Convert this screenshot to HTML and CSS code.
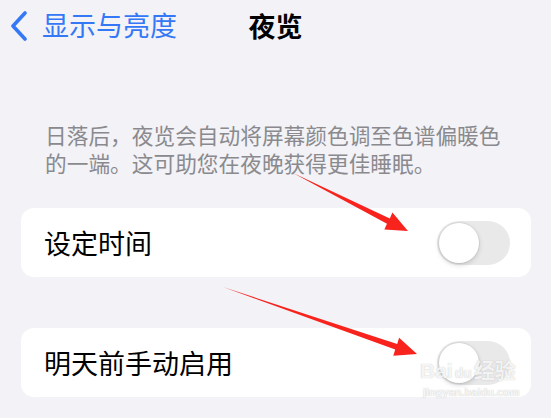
FILE: index.html
```html
<!DOCTYPE html>
<html lang="zh-CN">
<head>
    <meta charset="UTF-8">
    <meta name="viewport" content="width=device-width, initial-scale=1.0">
    <title>夜览</title>
    <link rel="stylesheet" href="styles.css">
</head>
<body>

    <div class="screen">
        <div class="navbar">
            <a class="back" href="#">
                <svg class="chevron" width="18" height="30" viewBox="0 0 18 30">
                    <path d="M15 2 L3 15 L15 28" fill="none" stroke="#3478f6" stroke-width="3.6" stroke-linecap="round" stroke-linejoin="round"/>
                </svg>
                <span>显示与亮度</span>
            </a>
            <div class="title">夜览</div>
            <div></div>
        </div>

        <p class="note">日落后，夜览会自动将屏幕颜色调至色谱偏暖色的一端。这可助您在夜晚获得更佳睡眠。</p>

        <div class="card">
            <span class="label">设定时间</span>
            <div class="toggle"><div class="knob"></div></div>
        </div>

        <div class="card second">
            <span class="label">明天前手动启用</span>
            <div class="toggle"><div class="knob"></div></div>
        </div>

        <svg class="arrows" width="551" height="418" viewBox="0 0 551 418">
            <polygon points="293,173 389.8,218.4 392.4,212.6 408,231 384.3,229.6 387,223.8" fill="#f7231c"/>
            <polygon points="223,287 397.2,344 399.1,337.8 417,354 393.3,355.8 395.2,349.6" fill="#f7231c"/>
        </svg>

        <div class="watermark">
            <div class="wm-logo">Bai<span class="wm-du">du</span>经验</div>
            <div class="wm-url">jingyan.baidu.com</div>
        </div>
    </div>

</body>
</html>
```

FILE: styles.css
```css
body {
    margin: 0;
    background-color: #f2f2f7;
    font-family: "Noto Sans CJK SC", "Noto Sans", sans-serif;
}
.screen {
    position: relative;
    width: 551px;
    height: 418px;
    overflow: hidden;
}
.navbar {
    display: grid;
    grid-template-columns: 1fr auto 1fr;
    align-items: center;
    height: 50px;
}
.back {
    display: flex;
    align-items: center;
    gap: 14px;
    padding-left: 10px;
    color: #3478f6;
    text-decoration: none;
    font-size: 27px;
    line-height: 50px;
}
.chevron {
    display: block;
    margin-top: 1px;
}
.title {
    font-size: 27px;
    font-weight: bold;
    color: #000;
}
.note {
    margin: 71px 0 0 45px;
    width: 470px;
    font-size: 21.7px;
    line-height: 28px;
    color: #8a8a8e;
}
.card {
    display: flex;
    align-items: center;
    justify-content: space-between;
    height: 69px;
    margin: 31px 20px 0 21px;
    padding: 0 21px 0 23px;
    background-color: #fff;
    border-radius: 13px;
}
.card.second {
    margin-top: 51px;
}
.label {
    font-size: 27px;
    color: #000;
}
.toggle {
    width: 73px;
    height: 44px;
    border-radius: 22px;
    background-color: #e9e9ea;
    padding: 2px;
    box-sizing: border-box;
}
.knob {
    width: 40px;
    height: 40px;
    border-radius: 50%;
    background-color: #fff;
    box-shadow: 0 2px 5px rgba(0, 0, 0, 0.16), 0 0 0 1px rgba(0, 0, 0, 0.05);
}
.arrows {
    position: absolute;
    left: 0;
    top: 0;
}
.watermark {
    position: absolute;
    left: 420px;
    top: 358px;
    color: rgba(255, 255, 255, 0.85);
    text-shadow: 0 0 1px rgba(120, 120, 120, 0.5);
    font-family: "Liberation Sans", "Noto Sans CJK SC", sans-serif;
}
.wm-logo {
    font-size: 21px;
    font-weight: bold;
    line-height: 26px;
}
.wm-du {
    font-size: 14px;
    margin: 0 2px;
}
.wm-url {
    font-size: 11px;
    font-weight: bold;
    margin-left: 3px;
}
```
